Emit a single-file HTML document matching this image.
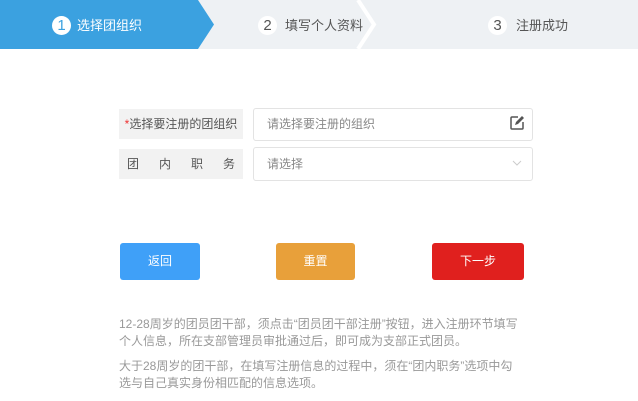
<!DOCTYPE html>
<html><head><meta charset="utf-8"><style>
body{margin:0;width:638px;height:401px;background:#fff;font-family:"Liberation Sans","Noto Sans CJK SC",sans-serif;position:relative;overflow:hidden}
.a{position:absolute}
.lbl{background:#f2f2f2;color:#555;font-size:12px;line-height:30px}
.inp{border:1px solid #e3e3e3;border-radius:3px;color:#888;font-size:12px;box-sizing:border-box;padding-left:13px}
.btn{border-radius:3px;color:#fff;font-size:12px;text-align:center;line-height:37px}
.t{color:#999;font-size:12px;left:119px;width:403px;line-height:17px}
.c{width:19px;height:19px;border-radius:50%;text-align:center;line-height:19px;font-size:15px}
</style></head><body>
<div class="a" style="left:0;top:0;width:638px;height:49px;background:#eef1f4"></div>
<svg class="a" style="left:0;top:0" width="638" height="49">
<polygon points="0,0 198,0 214,24.5 198,49 0,49" fill="#3ba1e0"/>
<polyline points="358,0 374,24.5 358,49" fill="none" stroke="#fff" stroke-width="4"/>
</svg>
<div class="a c" style="left:52px;top:16px;background:#fff;color:#3ba1e0">1</div>
<div class="a" style="left:77px;top:16px;color:#fff;font-size:13px;line-height:19px">选择团组织</div>
<div class="a c" style="left:258px;top:16px;background:#fff;color:#555">2</div>
<div class="a" style="left:285px;top:16px;color:#555;font-size:13px;line-height:19px">填写个人资料</div>
<div class="a c" style="left:488px;top:16px;background:#fff;color:#555">3</div>
<div class="a" style="left:516px;top:16px;color:#555;font-size:13px;line-height:19px">注册成功</div>

<div class="a lbl" style="left:119px;top:109px;width:124px;text-align:center"><span style="color:#e33">*</span>选择要注册的团组织</div>
<div class="a inp" style="left:253px;top:108px;width:280px;height:33px;line-height:31px">请选择要注册的组织</div>
<svg class="a" style="left:509px;top:115px" width="16" height="16" viewBox="0 0 16 16"><path d="M9 2H3a1 1 0 0 0-1 1v10a1 1 0 0 0 1 1h10a1 1 0 0 0 1-1V7" fill="none" stroke="#555" stroke-width="1.5"/><path d="M6 10l1-3 6-6 2 2-6 6z" fill="#555"/></svg>
<div class="a lbl" style="left:119px;top:149px;width:124px;display:flex;justify-content:space-between;padding:0 8px;box-sizing:border-box"><span>团</span><span>内</span><span>职</span><span>务</span></div>
<div class="a inp" style="left:253px;top:147px;width:280px;height:34px;line-height:32px">请选择</div>
<svg class="a" style="left:512px;top:160px" width="10" height="7"><polyline points="1,1 5,5 9,1" fill="none" stroke="#ccc"/></svg>

<div class="a btn" style="left:120px;top:243px;width:80px;height:37px;background:#3fa0f8">返回</div>
<div class="a btn" style="left:276px;top:243px;width:79px;height:37px;background:#e8a03a">重置</div>
<div class="a btn" style="left:432px;top:243px;width:92px;height:37px;background:#e0201e">下一步</div>

<div class="a t" style="top:316px">12-28周岁的团员团干部，须点击“团员团干部注册”按钮，进入注册环节填写个人信息，所在支部管理员审批通过后，即可成为支部正式团员。</div>
<div class="a t" style="top:358px">大于28周岁的团干部，在填写注册信息的过程中，须在“团内职务”选项中勾选与自己真实身份相匹配的信息选项。</div>
</body></html>
